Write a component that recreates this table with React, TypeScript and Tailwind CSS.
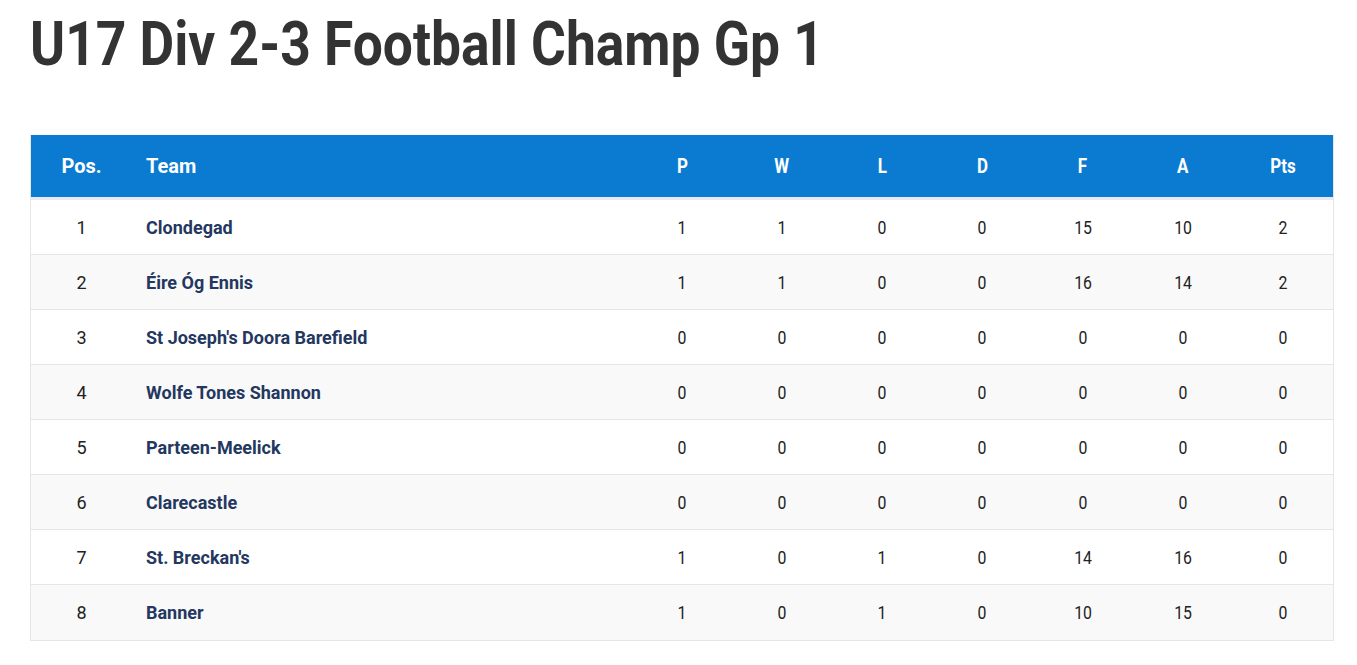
import React from "react";

const rows: [number, string, number, number, number, number, number, number, number][] = [
  [1, "Clondegad", 1, 1, 0, 0, 15, 10, 2],
  [2, "Éire Óg Ennis", 1, 1, 0, 0, 16, 14, 2],
  [3, "St Joseph's Doora Barefield", 0, 0, 0, 0, 0, 0, 0],
  [4, "Wolfe Tones Shannon", 0, 0, 0, 0, 0, 0, 0],
  [5, "Parteen-Meelick", 0, 0, 0, 0, 0, 0, 0],
  [6, "Clarecastle", 0, 0, 0, 0, 0, 0, 0],
  [7, "St. Breckan's", 1, 0, 1, 0, 14, 16, 0],
  [8, "Banner", 1, 0, 1, 0, 10, 15, 0],
];

const heads = ["P", "W", "L", "D", "F", "A", "Pts"];

export default function App() {
  return (
    <div className="min-h-[665px] bg-white px-[30px] pt-[8px]" style={{ fontFamily: "Roboto, 'Liberation Sans', sans-serif" }}>
      <h1 className="text-[62px] font-bold leading-[72px] text-[#333333] whitespace-nowrap">
        <span className="inline-block origin-left scale-x-[0.86]">U17 Div 2-3 Football Champ Gp 1</span>
      </h1>
      <div className="mt-[55px] w-[1304px] border-x border-b border-[#e6e6e6]">
        <div className="grid h-[62px] grid-cols-[101px_500px_repeat(7,1fr)] items-center bg-[#0a7bd0] text-[20px] font-bold text-white">
          <div className="text-center">Pos.</div>
          <div className="pl-[14px]">Team</div>
          {heads.map((h) => (
            <div key={h} className="text-center">
              <span className="inline-block scale-x-[0.85]">{h}</span>
            </div>
          ))}
        </div>
        <div className="h-[3px] bg-[#e9e9ef]" />
        {rows.map((r, i) => (
          <div
            key={r[0]}
            className={`grid h-[55px] grid-cols-[101px_500px_repeat(7,1fr)] items-center text-[18px] text-[#222222] ${i < rows.length - 1 ? "border-b border-[#e6e6e6]" : ""} ${i % 2 === 1 ? "bg-[#f9f9f9]" : "bg-white"}`}
          >
            <div className="text-center">{r[0]}</div>
            <div className="pl-[14px] font-bold text-[#23375f]">{r[1]}</div>
            {r.slice(2).map((v, j) => (
              <div key={j} className="text-center">
                <span className="inline-block scale-x-[0.88]">{v}</span>
              </div>
            ))}
          </div>
        ))}
      </div>
    </div>
  );
}
